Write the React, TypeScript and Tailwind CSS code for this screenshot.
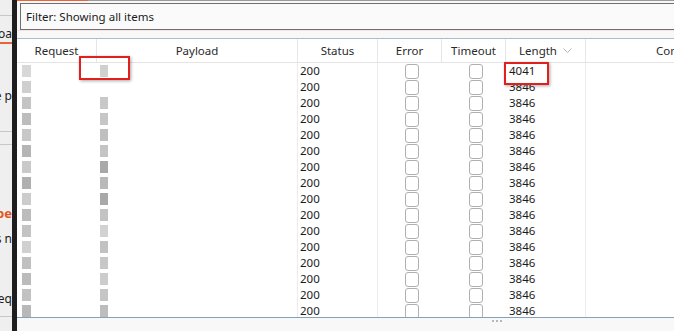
import React from "react";

const rows = [
  "4041", "3846", "3846", "3846", "3846", "3846", "3846", "3846",
  "3846", "3846", "3846", "3846", "3846", "3846", "3846", "3846",
];

const reqShades = ["#d8d8d8", "#cfcfcf", "#c4c4c4", "#bdbdbd", "#c8c8c8", "#b5b5b5", "#c9c9c9", "#b0b0b0", "#cccccc", "#bcbcbc", "#c3c3c3", "#d0d0d0", "#c0c0c0", "#bbbbbb", "#c2c2c2", "#b8b8b8"];
const payShades = ["#d0d0d0", "#ffffff", "#c8c8c8", "#c6c6c6", "#bfbfbf", "#c4c4c4", "#a9a9a9", "#b9b9b9", "#a8a8a8", "#c3c3c3", "#d2d2d2", "#c2c2c2", "#c7c7c7", "#cccccc", "#c5c5c5", "#bdbdbd"];

function Check() {
  return <div className="w-[14px] h-[15px] rounded-[3px] border border-[#b0b0b0] bg-white" />;
}

export default function App() {
  return (
    <div
      className="relative w-[674px] h-[331px] overflow-hidden flex bg-white text-[#1b1b1b]"
      style={{ fontFamily: "'Noto Sans', 'Open Sans', sans-serif" }}
    >
      {/* left background strip */}
      <div className="w-[12px] shrink-0 bg-[#efefef] flex flex-col text-[12px] leading-[16px] overflow-hidden text-[#1b1b1b]">
        <div className="h-[16px] border-b border-[#c8c8c8]" />
        <div className="h-[10px]" />
        <div className="flex justify-end whitespace-nowrap h-[16px]">Payloa</div>
        <div className="h-[2px] bg-[#e8643a]" />
        <div className="h-[44px]" />
        <div className="flex justify-end whitespace-nowrap h-[16px]">e p</div>
        <div className="h-[16px]" />
        <div className="h-[12px] border-b border-[#c8c8c8]" />
        <div className="h-[13px] border-b border-[#c8c8c8]" />
        <div className="h-[60px]" />
        <div className="flex justify-end whitespace-nowrap h-[16px] text-[#e2561f] font-bold text-[13px]">pe</div>
        <div className="h-[10px]" />
        <div className="flex justify-end whitespace-nowrap h-[16px]">s n</div>
        <div className="h-[44px]" />
        <div className="flex justify-end whitespace-nowrap h-[16px]">eq</div>
        <div className="h-[10px] border-b border-[#c8c8c8]" />
      </div>
      {/* dark divider */}
      <div className="w-[5px] shrink-0 bg-[#1e1e1e]" />

      {/* main dialog */}
      <div className="flex-1 flex flex-col bg-[#f7f7f7] min-w-0 text-[11.5px]">
        <div className="h-[3px] flex">
          <div className="w-[71px] h-[1px] bg-[#e8643a]" />
          <div className="flex-1 h-[1px] bg-[#9a9a9a]" />
        </div>
        <div className="h-[27px] ml-[3px] -mr-[2px] border border-[#707070] bg-[#fafafa] flex items-center pl-[5px] text-[11.5px]">
          Filter: Showing all items
        </div>
        <div className="h-[1px] bg-[#f3e3e3]" />
        <div className="h-[7px] bg-[#f8f8f8]" />
        <div className="h-[1px] bg-[#a9bccc]" />

        {/* table */}
        <div className="flex-1 bg-white flex flex-col min-h-0 overflow-hidden">
          <div className="h-[24px] shrink-0 flex text-[#2a2a2a] border-b border-[#e4e4e4]">
            <div className="w-[80px] shrink-0 flex items-center justify-center border-r border-[#e6e6e6]">Request</div>
            <div className="w-[201px] shrink-0 flex items-center justify-center border-r border-[#e6e6e6]">Payload</div>
            <div className="w-[80px] shrink-0 flex items-center justify-center border-r border-[#e6e6e6]">Status</div>
            <div className="w-[64px] shrink-0 flex items-center justify-center border-r border-[#e6e6e6]">Error</div>
            <div className="w-[64px] shrink-0 flex items-center justify-center border-r border-[#e6e6e6]">Timeout</div>
            <div className="w-[80px] shrink-0 flex items-center justify-center gap-[6px] border-r border-[#e6e6e6]">
              Length
              <svg width="9" height="6" viewBox="0 0 9 6" className="mt-[1px]">
                <path d="M0.5 0.5 L4.5 4.5 L8.5 0.5" stroke="#b5b5b5" strokeWidth="1" fill="none" />
              </svg>
            </div>
            <div className="flex-1 min-w-0 flex items-center pl-[70px] whitespace-nowrap overflow-hidden">Comment</div>
          </div>
          <div className="flex-1 flex flex-col min-h-0 overflow-hidden">
            {rows.map((len, i) => (
              <div key={i} className="h-[16px] shrink-0 flex leading-[16px]">
                <div className="w-[80px] shrink-0 flex items-center pl-[5px]">
                  <div className="w-[9px] h-[12px]" style={{ backgroundColor: reqShades[i] }} />
                </div>
                <div className="w-[201px] shrink-0 flex items-center pl-[3px] border-r border-[#ededed]">
                  <div className="w-[8px] h-[12px]" style={{ backgroundColor: payShades[i] }} />
                </div>
                <div className="w-[80px] shrink-0 pl-[2px] border-r border-[#ededed]">200</div>
                <div className="w-[64px] shrink-0 flex items-center justify-center pl-[3px]">
                  <Check />
                </div>
                <div className="w-[64px] shrink-0 flex items-center justify-center pl-[4px]">
                  <Check />
                </div>
                <div className="w-[80px] shrink-0 pl-[3px] border-r border-[#ededed]">{len}</div>
                <div className="flex-1" />
              </div>
            ))}
          </div>
        </div>
        <div className="h-[1px] bg-[#7fa3c0]" />
        <div className="h-[13px] bg-[#f8f8f8] flex">
          <div className="ml-[475px] mt-[2px] flex gap-[2px]">
            <div className="w-[2px] h-[2px] bg-[#b8b8b8]" />
            <div className="w-[2px] h-[2px] bg-[#b8b8b8]" />
            <div className="w-[2px] h-[2px] bg-[#b8b8b8]" />
          </div>
        </div>
      </div>

      {/* red highlight boxes */}
      <div className="absolute left-[79px] top-[56px] w-[51px] h-[24px] border-2 border-[#e0201d] shadow-[1px_1px_3px_rgba(0,0,0,0.35)]" />
      <div className="absolute left-[504px] top-[62px] w-[45px] h-[23px] border-2 border-[#e0201d] shadow-[1px_1px_3px_rgba(0,0,0,0.35)]" />
    </div>
  );
}
